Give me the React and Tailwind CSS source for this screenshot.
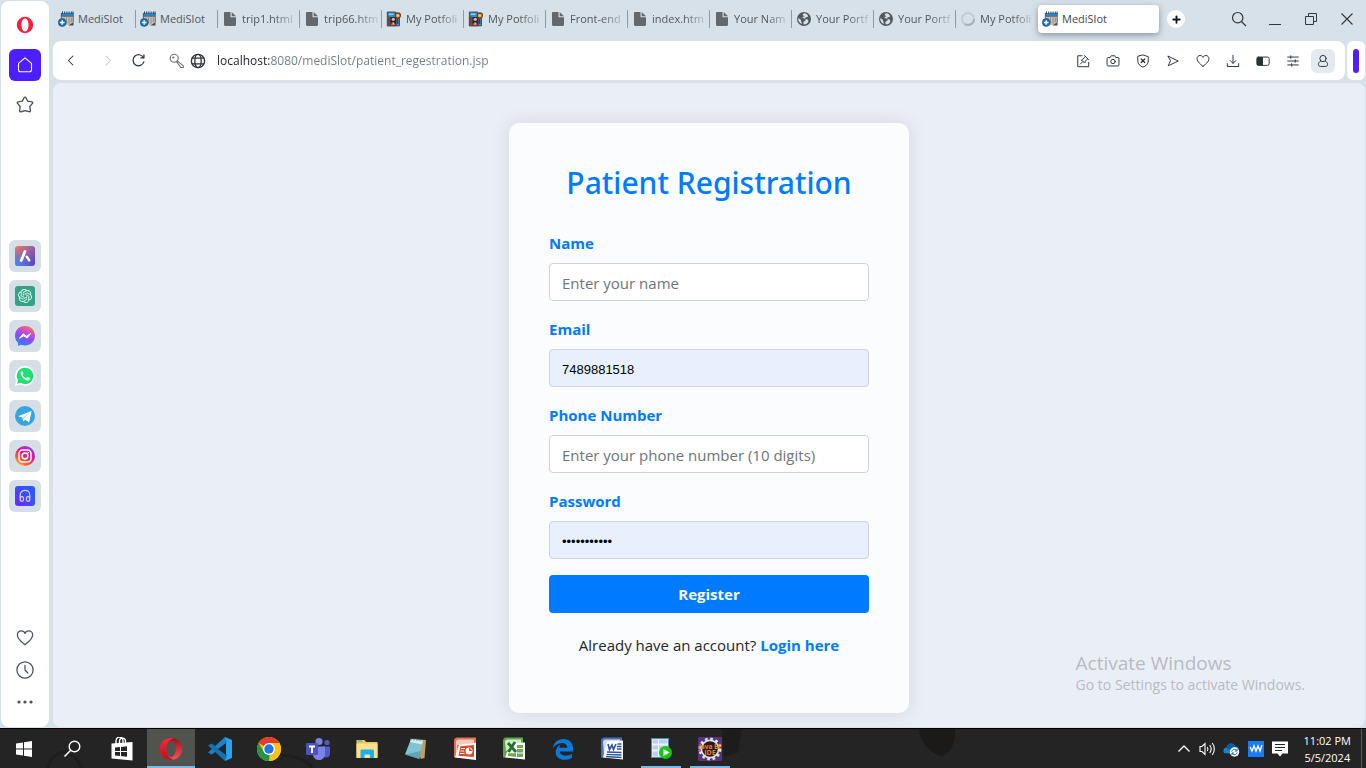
import React from "react";
import { Plus } from "lucide-react";
import { SiOpenai } from "react-icons/si";

/* ---------- tab favicons ---------- */

function CalendarIcon() {
  return (
    <svg viewBox="0 0 16 16" className="size-4 shrink-0" aria-hidden="true">
      <path d="M3 2h12l.4 10-2.400 2H4z" fill="#c4c0bb" />
      <path d="M15.500 11v3.500h-5z" fill="#4a4a4a" />
      <rect x="3.200" y="2" width="12" height="3" fill="#2388d6" />
      <path d="M3.200 5.300h12M3.300 2v11M15.300 2v9" stroke="#4a4f54" strokeWidth="0.800" />
      <path d="M4.500.5v2.200M6.700.5v2.200M8.900.5v2.200M11.100.5v2.200M13.300.5v2.200M15 .5v2.200" stroke="#30363b" strokeWidth="1" />
      <path d="M6 6.500v6M8.500 6.500v6M11 6.500v6M13.300 6.500v4.500" stroke="#8b8682" strokeWidth="0.900" />
      <circle cx="4.200" cy="11.500" r="3.900" fill="#1673bd" stroke="#164a78" strokeWidth="0.600" />
      <path d="M4.200 9.200v4.600M1.900 11.500h4.600" stroke="#fff" strokeWidth="1.400" />
    </svg>
  );
}

function FileIcon() {
  return (
    <svg viewBox="0 0 16 16" className="size-4 shrink-0" aria-hidden="true">
      <path d="M3.200 1h5.300v5.300H14v7.500c0 .7-.5 1.200-1.200 1.200H3.200C2.500 15 2 14.500 2 13.800V2.200C2 1.500 2.500 1 3.200 1z" fill="#63686c" />
      <path d="M9.700 1 14 5.200H9.700z" fill="#63686c" />
    </svg>
  );
}

function PortfolioIcon() {
  return (
    <svg viewBox="0 0 16 16" className="size-4 shrink-0" aria-hidden="true">
      <path d="M1.300 1h8.500v14H1.300z" fill="#2f8fd8" stroke="#35302f" strokeWidth="0.800" />
      <path d="M9.500 7.500h4v7.300h-4z" fill="#3d96d6" stroke="#37302e" strokeWidth="0.800" />
      <path d="M3 2.500h4.500v1.500H3z" fill="#8ed0f4" />
      <path d="M2 5.500h1.800v9H2z" fill="#7b3b25" />
      <rect x="4.300" y="6" width="6.200" height="8.800" fill="#27272d" />
      <circle cx="7.300" cy="8.300" r="1.600" fill="#f3b58d" />
      <path d="M4.800 14.600c0-4 4.900-4 4.900 0z" fill="#e14b37" />
      <path d="M7.200 11.500v2" stroke="#fff" strokeWidth="0.900" />
      <path d="M11.700 8v5" stroke="#5b331c" strokeWidth="1.300" />
      <circle cx="11.800" cy="4.600" r="2.600" fill="#f2a33a" stroke="#713e1f" strokeWidth="1.300" />
      <circle cx="11.800" cy="4.600" r="1" fill="#fbd58a" />
    </svg>
  );
}

function WorldIcon() {
  return (
    <svg viewBox="0 0 16 16" className="size-4 shrink-0" aria-hidden="true">
      <circle cx="8" cy="8" r="7" fill="#54595d" />
      <path d="M8.800 2.300c-1.400.4-2.400 1.200-2 2 .3.700 1.400.1 1.600.9.100.7-1.800.5-2 1.400-.1.700 1 .8 2.200.8 1.400.1 1.500 1.400.8 2.100-.6.700-1.800.7-2 1.700-.1.800.2 1.700.8 2.300 1.700-.2 3.400-1.300 4.300-2.800-.6-.8-.2-1.600-1-2.300-.7-.6-2.200-.2-2.300-1.200 0-.9 1.300-.9 2.200-1.100.6-.1.700-1 .3-1.800-.7-.9-1.700-1.700-2.900-2z" fill="#d7e1e9" />
      <path d="M2.200 7.300c1.300.5 2.400.8 2.700 1.700.3.800-.1 1.700.8 2.400v1.600C3.500 12 2.100 10 2.200 7.300z" fill="#d7e1e9" />
    </svg>
  );
}

function SpinnerIcon() {
  return (
    <svg viewBox="0 0 16 16" className="size-4 shrink-0" aria-hidden="true">
      <circle cx="8" cy="8" r="6" fill="none" stroke="#c3ccd5" strokeWidth="2" />
      <path d="M14 8a6 6 0 0 1-9 5.200" fill="none" stroke="#a7b1bb" strokeWidth="2" />
    </svg>
  );
}

const TABS = [
  ["MediSlot", CalendarIcon],
  ["MediSlot", CalendarIcon],
  ["trip1.html", FileIcon],
  ["trip66.htm", FileIcon],
  ["My Potfoli", PortfolioIcon],
  ["My Potfoli", PortfolioIcon],
  ["Front-end", FileIcon],
  ["index.htm", FileIcon],
  ["Your Nam", FileIcon],
  ["Your Portf", WorldIcon],
  ["Your Portf", WorldIcon],
  ["My Potfoli", SpinnerIcon],
];

function TabStrip() {
  return (
    <div className="flex items-center pt-[5px] pb-2 pl-px">
      <div className="flex min-w-0 items-center">
        {TABS.map(([title, Icon], i) => (
          <button
            key={i}
            type="button"
            className="relative flex h-7 w-[82px] min-w-0 shrink items-center gap-1 pl-1 text-[11px] text-[#50575d]"
          >
            <Icon />
            <span
              className={`min-w-0 flex-1 overflow-hidden text-left whitespace-nowrap ${
                title === "MediSlot" ? "" : "[mask-image:linear-gradient(to_right,black_55%,transparent)]"
              }`}
            >
              {title}
            </span>
            {i < TABS.length - 1 && <i className="absolute top-[5px] right-0 h-[18px] w-px bg-[#92999f]" />}
          </button>
        ))}
        <button
          type="button"
          className="flex h-7 w-[121px] items-center gap-1 rounded-[4px] bg-white px-1 text-[11px] text-[#41484e] shadow-[0_2px_6px_rgba(60,75,90,0.5)]"
        >
          <CalendarIcon />
          <span>MediSlot</span>
        </button>
      </div>
      <button type="button" aria-label="New tab" className="ml-2 flex size-[18px] shrink-0 items-center justify-center rounded-full bg-white text-[#101820]">
        <Plus size={11} strokeWidth={4} />
      </button>
      <div className="ml-auto flex shrink-0 text-[#33383c]">
        <button type="button" aria-label="Search tabs" className="flex h-7 w-9 items-center justify-center">
          <svg viewBox="0 0 16 16" className="size-4" fill="none" stroke="currentColor" strokeWidth="1.200">
            <circle cx="6.700" cy="6.700" r="5.200" />
            <path d="m10.500 10.500 4.500 4.500" />
          </svg>
        </button>
        <button type="button" aria-label="Minimize" className="flex h-7 w-9 items-center justify-center">
          <svg viewBox="0 0 14 14" className="size-3.5"><path d="M1 12.500h12" stroke="currentColor" /></svg>
        </button>
        <button type="button" aria-label="Restore" className="flex h-7 w-9 items-center justify-center">
          <svg viewBox="0 0 14 14" className="size-3.5" fill="none" stroke="currentColor">
            <path d="M1.500 4.500h8v8h-8zM4.500 4.500v-3h8v8h-3" />
          </svg>
        </button>
        <button type="button" aria-label="Close window" className="flex h-7 w-9 items-center justify-center">
          <svg viewBox="0 0 14 14" className="size-3.5"><path d="m1.500 1.500 11 11m0-11-11 11" stroke="currentColor" strokeWidth="1.100" /></svg>
        </button>
      </div>
    </div>
  );
}

/* ---------- address bar ---------- */

function Line({ children, className = "size-4" }) {
  return (
    <svg viewBox="0 0 16 16" className={className} fill="none" stroke="currentColor" strokeWidth="1.100" strokeLinecap="round" strokeLinejoin="round" aria-hidden="true">
      {children}
    </svg>
  );
}

const HEART = <path d="M8 14C5.500 12 1.200 9 1.200 5.300 1.200 3.200 2.800 1.700 4.700 1.700 6.200 1.700 7.400 2.500 8 3.900 8.600 2.500 9.800 1.700 11.300 1.700 13.200 1.700 14.800 3.200 14.800 5.300 14.800 9 10.500 12 8 14z" />;

const TOOLS = [
  ["Easy setup", <><path d="M7 2H2v12.500h12.500V9.500" /><path d="m5 11.500 2.700-2.700M6.500 7l3.300 3.300c.7-.5.9-1.300.7-2l3-2.800L10.800 2.700 8 5.800C7.400 5.900 6.900 6.300 6.500 7zM9.800 1.800l4.500 4.500" /></>],
  ["Snapshot", <><path d="M1.200 5.200c0-.7.5-1.200 1.200-1.200h2.400L6 2h4l1.200 2h2.400c.7 0 1.200.5 1.200 1.200v7.300c0 .7-.5 1.200-1.200 1.200H2.400c-.7 0-1.200-.5-1.200-1.200z" /><circle cx="8" cy="8.600" r="2.500" /></>],
  ["Shield", <><path d="M8 1.200 14 3v5c0 3.500-2.700 5.700-6 7-3.300-1.300-6-3.500-6-7V3z" /><path d="m6 5.800 4 4m0-4-4 4" strokeWidth="1.500" /></>],
  ["Send page", <path d="M2.500 2.500 14 8 2.500 13.500 5 8z" />],
  ["Bookmark", HEART],
  ["Downloads", <><path d="M8 1.500v9M4.800 7.500 8 10.700l3.200-3.200" /><path d="M1.500 11v3.300h13V11" /></>],
  ["Battery saver", <><rect x="1" y="3.500" width="14" height="9.500" rx="1.800" /><path d="M2 3.500h6v9.500H2L1 12V4.500z" fill="currentColor" stroke="none" /></>],
  ["Settings", <><path d="M2 3.500h12M2 8h12M2 12.500h12M5.500 2v3M10.500 6.500v3M6.500 11v3" /></>],
];

function AddressBar() {
  return (
    <div className="flex gap-0.5">
      <div className="flex h-[39px] min-w-0 flex-1 items-center rounded-lg bg-white pr-[7px] text-[#27323b]">
        <button type="button" aria-label="Back" className="flex w-9 justify-center"><Line className="size-[15px]"><path d="M9.500 3.200 4.700 8l4.800 4.800" /></Line></button>
        <button type="button" aria-label="Forward" className="flex w-9 justify-center text-[#c0c5c9]"><Line className="size-[15px]"><path d="M6.500 3.200 11.300 8l-4.800 4.800" /></Line></button>
        <button type="button" aria-label="Reload" className="flex w-[26px] justify-center">
          <Line className="size-[15px]"><path d="M13.200 4.800A5.900 5.900 0 1 0 13.700 9.500" strokeWidth="1.300" /><path d="M13.800 2v3.300h-3.300" strokeWidth="1.300" /></Line>
        </button>
        <button type="button" aria-label="Saved passwords" className="ml-4 flex w-5 justify-center text-[#6a7177]">
          <Line><circle cx="5.200" cy="5.200" r="4" /><circle cx="4.300" cy="4.500" r=".5" /><path d="m8.300 7.800 6 5v1.700h-2.500L7.500 8.700" /></Line>
        </button>
        <button type="button" aria-label="Site information" className="flex w-[22px] justify-center">
          <Line><g strokeWidth="1.300"><circle cx="8" cy="8" r="6.600" /><ellipse cx="8" cy="8" rx="3.200" ry="6.600" /><path d="M2.200 5.200h11.600M2.200 10.800h11.600" /></g></Line>
        </button>
        <input
          aria-label="Address"
          defaultValue="localhost:8080/mediSlot/patient_regestration.jsp"
          className="ml-2 min-w-0 flex-1 bg-[linear-gradient(to_right,#1a1f24_53px,#6b7d8e_53px)] bg-clip-text text-xs text-transparent caret-black outline-none"
        />
        <div className="flex shrink-0">
          {TOOLS.map(([label, art]) => (
            <button key={label} type="button" aria-label={label} className="flex h-6 w-[30px] items-center justify-center"><Line className="size-[14px]">{art}</Line></button>
          ))}
          <button type="button" aria-label="Profile" className="mx-[3px] flex size-6 items-center justify-center rounded-md bg-[#e4eaef]">
            <Line className="size-[14px]"><circle cx="8" cy="5.200" r="3.600" /><path d="M5.300 8C3.500 9 2.800 10.500 2.800 12c0 1.500 1 2.200 2.300 2.200h5.800c1.300 0 2.300-.7 2.300-2.200 0-1.500-.7-3-2.500-4" /></Line>
          </button>
        </div>
      </div>
      <div className="flex w-[18px] items-center justify-center rounded-md bg-white">
        <span className="h-6 w-1.5 rounded-full bg-[#4d1fff]" />
      </div>
    </div>
  );
}

/* ---------- browser sidebar ---------- */

const APPS = [
  ["Aria", (
    <><defs><linearGradient id="aria" x1="0" y1="0" x2="1" y2="1"><stop stopColor="#f87a55" /><stop offset=".45" stopColor="#9a62a0" /><stop offset="1" stopColor="#4b3fd0" /></linearGradient>
      <linearGradient id="aria2" x1="0" y1="1" x2=".5" y2=".5"><stop stopColor="#318dff" /><stop offset="1" stopColor="#318dff" stopOpacity="0" /></linearGradient></defs>
      <rect width="20" height="20" rx="3" fill="url(#aria)" /><rect width="20" height="20" rx="3" fill="url(#aria2)" />
      <path d="M10 5.500 6.200 14.500" stroke="#fff" strokeWidth="2.800" strokeLinecap="round" /><path d="m11.800 10.800 2.400 3.500" stroke="#fff" strokeWidth="2.600" strokeLinecap="round" /></>
  )],
  ["ChatGPT", (
    <><rect width="20" height="20" rx="3" fill="#32a388" /><SiOpenai x="3" y="3" size={14} color="#e6f6f1" /></>
  )],
  ["Messenger", (
    <><defs><linearGradient id="msg" x1=".2" y1="1" x2=".7" y2="0"><stop stopColor="#1a8cff" /><stop offset=".5" stopColor="#9a45f8" /><stop offset="1" stopColor="#ff6670" /></linearGradient></defs>
      <path d="M10 0C4.300 0 0 4.200 0 9.700c0 2.900 1.200 5.400 3.100 7.100V20l2.900-1.200c1.300.4 2.600.6 4 .6 5.700 0 10-4.200 10-9.700S15.700 0 10 0z" fill="url(#msg)" />
      <path d="m4.500 12.300 3.600-4.500 3.200 2.400 4.300-2.800-3.400 4.700-3.400-2.300z" fill="#fff" stroke="#fff" strokeWidth="1" strokeLinejoin="round" /></>
  )],
  ["WhatsApp", (
    <><path d="M10 0a9.900 9.900 0 0 0-8.600 14.800L0 20l5.300-1.400A9.900 9.900 0 1 0 10 0z" fill="#fff" />
      <path d="M10 1.700a8.200 8.200 0 0 0-7 12.500l-.9 3.500 3.600-.9A8.200 8.200 0 1 0 10 1.700z" fill="#20df73" />
      <path d="M6.600 5.200c-1 .8-1.300 2-.6 3.500 1.200 2.700 3 4.500 5.600 5.500 1.500.5 2.800 0 3.300-1.300.2-.7 0-.9-.5-1.100l-1.700-.8c-.4-.2-.7 0-1 .4-.5.700-.8.700-1.500.3-1-.6-1.900-1.400-2.500-2.500-.3-.5.300-.8.600-1.400.1-.3 0-.6-.1-.9L7.600 5.500c-.2-.4-.5-.5-1-.3z" fill="#fff" /></>
  )],
  ["Telegram", (
    <><circle cx="10" cy="10" r="10" fill="#34a5de" />
      <path d="m3.800 9.900 11.800-4.600c.5-.2 1 .1.800.9l-2 9.300c-.1.700-.6.800-1.100.5l-3-2.300-1.500 1.400c-.3.300-.6.300-.7-.2l-.8-3.300-3.400-1.100c-.6-.2-.6-.4-.1-.6z" fill="#fff" />
      <path d="m7.800 11.700 5.700-4-4.600 4.700-.2 2z" fill="#a9d5ec" /></>
  )],
  ["Instagram", (
    <><defs><linearGradient id="insta" x1=".1" y1="1" x2=".8" y2="0"><stop stopColor="#ffd54c" /><stop offset=".3" stopColor="#ff5a2c" /><stop offset=".6" stopColor="#ee138c" /><stop offset="1" stopColor="#8938f5" /></linearGradient></defs>
      <circle cx="10" cy="10" r="10" fill="url(#insta)" />
      <g fill="none" stroke="#fff" strokeWidth="1.500"><rect x="4" y="4" width="12" height="12" rx="3.500" /><circle cx="10" cy="10" r="2.900" /></g>
      <circle cx="13.400" cy="6.600" r=".8" fill="#fff" /></>
  )],
  ["Player", (
    <><defs><linearGradient id="player" x1="0" y1="1" x2="1" y2="0"><stop stopColor="#7720ff" /><stop offset=".55" stopColor="#3a50ff" /><stop offset="1" stopColor="#235cff" /></linearGradient></defs>
      <rect width="20" height="20" rx="3" fill="url(#player)" />
      <path d="M7 15.300c.9 0 1.500-.6 1.500-1.500v-1.600c0-.9-.6-1.500-1.500-1.500-1.200 0-1.800.8-1.800 2.300s.6 2.300 1.800 2.300zM13 15.300c-.9 0-1.500-.6-1.500-1.500v-1.600c0-.9.6-1.500 1.500-1.500 1.200 0 1.800.8 1.800 2.300s-.6 2.300-1.800 2.300zM5.200 12.500V9c0-6.300 9.600-6.300 9.600 0v3.500" fill="none" stroke="#d2cdff" strokeWidth="1.200" /></>
  )],
];

function SideButton({ label, children, className = "" }) {
  return (
    <button type="button" aria-label={label} className={`flex size-8 items-center justify-center rounded-md ${className}`}>
      {children}
    </button>
  );
}

function Sidebar() {
  return (
    <nav aria-label="Sidebar" className="my-px ml-px flex w-12 shrink-0 flex-col items-center rounded-lg bg-white pt-2 pb-[9px] text-[#4a535b]">
      <div className="flex flex-col gap-2">
        <SideButton label="Opera menu">
          <svg viewBox="0 0 18 18" className="size-[18px]"><path fillRule="evenodd" d="M9 .8a8.200 8.200 0 1 0 0 16.400A8.200 8.200 0 0 0 9 .8zm0 1.800c2.200 0 3.500 2.700 3.500 6.400s-1.300 6.400-3.500 6.400S5.500 12.700 5.500 9 6.800 2.600 9 2.600z" fill="#fa1e3c" /></svg>
        </SideButton>
        <SideButton label="Home" className="bg-[#4d1fff] text-white">
          <Line><path d="m8 .8 6.500 5.500v6.500c0 1.300-.7 2-2 2h-9c-1.300 0-2-.7-2-2V6.300z" /></Line>
        </SideButton>
        <SideButton label="Favorites">
          <Line className="size-[18px]"><path strokeWidth="1.200" d="M7.200 1.500c.4-.7 1.200-.7 1.600 0l1.600 3.100 3.700.6c.8.100 1 .9.500 1.400l-2.300 2.700.5 3.600c.1.900-.6 1.300-1.300 1L8 13l-3.500 1c-.7.200-1.400-.2-1.300-1l.5-3.700-2.300-2.700c-.5-.5-.3-1.300.5-1.400l3.700-.6z" /></Line>
        </SideButton>
      </div>
      <div className="mt-[119px] flex flex-col gap-2">
        {APPS.map(([label, art]) => (
          <SideButton key={label} label={label} className="bg-[#d5dfe5]">
            <svg viewBox="0 0 20 20" className="size-5" fill="none">{art}</svg>
          </SideButton>
        ))}
      </div>
      <div className="mt-auto flex flex-col">
        <SideButton label="Likes"><Line className="size-[18px]">{HEART}</Line></SideButton>
        <SideButton label="History"><Line className="size-[18px]"><circle cx="8" cy="8" r="7.200" /><path d="M8 3.800V8l2.500 2.700" /></Line></SideButton>
        <SideButton label="More">
          <svg viewBox="0 0 16 4" className="h-1 w-4" fill="currentColor"><circle cx="2" cy="2" r="1.600" /><circle cx="8" cy="2" r="1.600" /><circle cx="14" cy="2" r="1.600" /></svg>
        </SideButton>
      </div>
    </nav>
  );
}

/* ---------- page ---------- */

const FIELDS = [
  { id: "name", label: "Name", type: "text", placeholder: "Enter your name" },
  { id: "email", label: "Email", type: "text", value: "7489881518" },
  { id: "phone", label: "Phone Number", type: "tel", placeholder: "Enter your phone number (10 digits)" },
  { id: "password", label: "Password", type: "password", value: "password123" },
];

function RegistrationPage() {
  return (
    <main className="relative flex flex-1 items-start justify-center overflow-hidden rounded-lg bg-[#eaeff7] px-4 pt-10 pb-[14px]">
      <form
        onSubmit={(e) => e.preventDefault()}
        className="w-full max-w-[400px] rounded-[10px] bg-[#fbfcfe] p-10 text-[15px] leading-6 shadow-[0_0_20px_rgba(0,0,0,0.1)]"
      >
        <h2 className="mb-[30px] pt-0.5 text-center font-['Noto_Sans','Open_Sans',sans-serif] text-[30px] leading-[36px] font-medium text-[#007bff]">
          Patient Registration
        </h2>
        {FIELDS.map((f) => (
          <div key={f.id} className="mb-4">
            <label htmlFor={f.id} className="mb-2 block font-bold text-[#007bff]">{f.label}</label>
            <input
              id={f.id}
              type={f.type}
              placeholder={f.placeholder}
              defaultValue={f.value}
              className={`block h-[38px] w-full rounded-[4px] border border-[#ced4da] px-3 pt-0.5 outline-none placeholder:text-[#6c757d] ${
                f.value ? "bg-[#e8f0fe] font-['Liberation_Sans',Arial,sans-serif] text-[13px] text-black" : "bg-white"
              }`}
            />
          </div>
        ))}
        <button type="submit" className="block h-[38px] w-full rounded-[4px] bg-[#007bff] font-bold text-white">Register</button>
        <p className="mt-5 mb-4 text-center text-[#212529]">
          Already have an account? <a href="#login" className="font-bold text-[#007bff]">Login here</a>
        </p>
      </form>
      <div className="pointer-events-none absolute right-15 bottom-8 text-[#b8bbc0]">
        <p className="text-[19px] leading-6">Activate Windows</p>
        <p className="text-sm leading-5">Go to Settings to activate Windows.</p>
      </div>
    </main>
  );
}

/* ---------- taskbar ---------- */

const TASKS = [
  ["Start", <path d="M4 6.500 11 5.500v6H4zM12 5.300l8-1.200v7.400h-8zM4 12.500h7v6l-7-1zM12 12.500h8v7.400l-8-1.200z" fill="#fff" />],
  ["Search", <><circle cx="13.500" cy="9.500" r="5.300" fill="none" stroke="#fff" strokeWidth="1.400" /><path d="m9.700 13.300-6.200 6.200" stroke="#fff" strokeWidth="1.600" /></>],
  ["Store", <><path d="M1.500 6.500 22.500 5v18.500l-21-2z" fill="#fff" /><path d="M6 7V4.500C6-1.500 13-1 13 4v2.500M9.500 6V4.500c0-4.500 6-4.500 6 0V6" fill="none" stroke="#fff" strokeWidth="1.400" /><path d="m5 10.500 5-.5v4H5zM11 9.900l6-.6v4.700h-6zM5 15h5v4l-5-.5zM11 15h6v4.800l-6-.7z" fill="#262626" /></>],
  ["Opera", <><defs><linearGradient id="op1" x2="0" y2="1"><stop stopColor="#ff2a3b" /><stop offset="1" stopColor="#b90d1c" /></linearGradient><linearGradient id="op2" x2="0" y2="1"><stop stopColor="#a20b18" /><stop offset="1" stopColor="#ff5257" /></linearGradient></defs><ellipse cx="12" cy="12" rx="11.200" ry="11" fill="url(#op2)" /><path d="M15.500 2.200C10.500-1 .8 2.500.8 12s9.700 13 14.700 9.800c-5 1-8-4-8-9.800s3-10.800 8-9.800z" fill="url(#op1)" /><ellipse cx="12" cy="12" rx="4.800" ry="8.200" fill="#51534f" /></>],
  ["Visual Studio Code", <><path d="m17 0 7 3v18l-7 3z" fill="#27a4ee" /><path d="m17 0 2 6-15.300 11.500L0 15.500z" fill="#1b83c5" /><path d="m17 24 2-6L3.700 6.500 0 8.500z" fill="#1173b3" /><path d="M18 6v12l-8-6z" fill="#242424" /></>],
  ["Chrome", <><circle cx="12" cy="12" r="12" fill="#fbc116" /><path d="M12 12 1.600 6A12 12 0 0 1 22.400 6z" fill="#e33b2e" /><path d="M1.600 6 7 15l5.500 2.500L12 24A12 12 0 0 1 1.600 6z" fill="#269447" /><path d="M12 6h10.400a12 12 0 0 1-10.400 18l5-9z" fill="#fbc116" /><circle cx="12" cy="12" r="6" fill="#fff" /><circle cx="12" cy="12" r="4.700" fill="#2177e8" /></>],
  ["Teams", <><circle cx="13" cy="4.500" r="3.600" fill="#7b83eb" /><circle cx="21" cy="5.500" r="2.600" fill="#5059c9" /><path d="M17 9.500h7v7c0 4-4 5-7 3z" fill="#5059c9" /><path d="M7 9.500h12v7.500c0 8-12 8-12 0z" fill="#7b83eb" /><rect y="6" width="12" height="12" rx="1" fill="#4b53bc" /><path d="M3 9.500h6M6 9.500v6.500" stroke="#fff" strokeWidth="1.800" /></>],
  ["File Explorer", <><path d="M1.500 3h8l1.500 2h11.500v15.500h-21z" fill="#efc451" /><path d="M1.500 6.500h21v14.500h-21z" fill="#ffe08a" /><path d="M3 4h4" stroke="#3bb4e8" strokeWidth="1.200" /><path d="M5.500 14c0-1 .6-1.500 1.500-1.500h10.500c.9 0 1.500.5 1.500 1.500v7h-4v-3.500h-5.500V21h-4z" fill="#18b1f0" /></>],
  ["Notepad", <><path d="m8 2 14 1-1.500 18L17 22z" fill="#c59c61" /><path d="m7 2 12 1.500L15.500 22 1 17.500z" fill="#81c3d0" /><path d="m7 2 12 1.500-1 4L6 5z" fill="#d5edf2" /><path d="m1 17.500 14.500 4.500 1.500-8z" fill="#4593a4" opacity=".6" /><path d="M7 1v2.500M10 1.200v2.500M13 1.500V4M16 1.700v2.500" stroke="#59777e" strokeWidth=".8" /></>],
  ["PowerPoint", <><path d="M1 4c0-2 1-3.500 3-3.500h19V6L5 20.500H1z" fill="#e2714f" /><path d="M3 5c0-1.500 1-2.500 2.500-2.500H21V6L4 8v10H3z" fill="#f9cabc" /><path d="m6 7.500 17-1.700V23L2 20.500z" fill="#fff" /><path d="m7.500 9.300 13.500-1.200v12L5.500 18.800z" fill="#dc4923" /><circle cx="16" cy="14" r="3.500" fill="#fff" /><path d="M16 14v-3.700l3.500 3.700z" fill="#dc4923" /><path d="M8 11.500h4M7.500 14h3.500M7 16.500h4.500" stroke="#fff" strokeWidth="1.200" /></>],
  ["Excel", <><path d="M1 4c0-2 1-3.500 3-3.500h17V6L5 20.500H1z" fill="#5da64d" /><path d="M3 5c0-1.500 1-2.500 2.500-2.500H19V6L4 14z" fill="#d3ecc8" /><path d="m5 15 8-9 10-.5V22.500L3 20.500z" fill="#fff" /><path d="M15 8h6v3h-6zM15 12h6v3.500h-6zM15 16.500h6v3.500h-6zM6 16.200h8V20l-8-1z" fill="#6caa54" /><path d="m6 6 8 9M13 5 6.500 15" stroke="#256d34" strokeWidth="2.800" /></>],
  ["Edge", <path transform="translate(2 2) scale(.84)" d="M0 10.700C.7 4.500 5.300 0 12.500 0 19.500 0 24 5 24 11.500V15H8c.5 5 8 6.500 14.500 3v4.500C12 28 1.500 23 3.500 13.500c.8-3.500 3-5.700 5.700-7C8 8 7.800 9.200 7.700 10.500H17C17 2.500 5.500 3 0 10.700z" fill="#087bd8" />],
  ["Word", <><path d="M1 4c0-2 1-3.500 3-3.500h18V6L5 20.500H1z" fill="#4b70b4" /><path d="M3 5c0-1.500 1-2.500 2.500-2.500H20V6L4 18z" fill="#cfdcf2" /><path d="m7 4.500 16-1V22.500L3 20.500z" fill="#fff" /><path d="M17.500 7h4M17 9.500h4.500M17 12h4.500M7 15l14.500.5M6.500 17.300l15 .7M6 19.500l15.500 1" stroke="#2b559f" strokeWidth="1.300" /><path d="m8 7 1.500 5.500L12 8l1.500 4.500L16 7" fill="none" stroke="#2b559f" strokeWidth="1.700" /></>],
  ["Server Manager", <><rect x="2.500" y="1.500" width="17" height="19" fill="#edf4fb" stroke="#5b84b5" /><path d="M3.500 2.500h15v4h-15zM3.500 8.500h15v4h-15zM3.500 14.500h15v5h-15z" fill="#b9d0ea" /><path d="M9.500 2.500v17" stroke="#e9f3fc" /><circle cx="16.500" cy="15.500" r="6.500" fill="#18c80e" /><path d="m14.500 12 6 3.500-6 3.500z" fill="#fff" /></>],
  ["Java EE IDE", <><rect width="24" height="24" rx="1" fill="#54357b" /><circle cx="12" cy="12" r="10" fill="none" stroke="#e2e2e2" strokeWidth="3" strokeDasharray="2.600 2.636" /><circle cx="12" cy="12" r="8.600" fill="#201c26" stroke="#e2e2e2" strokeWidth="1.600" /><text x="12" y="11.500" textAnchor="middle" fontSize="6.500" fontWeight="700" fill="#f58220">Java EE</text><text x="12" y="18" textAnchor="middle" fontSize="7" fontWeight="700" fill="#f58220">IDE</text></>],
];

function Taskbar() {
  return (
    <footer className="relative flex h-10 shrink-0 items-stretch overflow-hidden border-t border-black bg-[#242424] text-white">
      <svg viewBox="0 0 1366 40" preserveAspectRatio="none" className="absolute inset-0 h-full w-full" aria-hidden="true">
        <path d="M919 0h36c1 10-3 25-13 28-10-2-22-13-23-28z" fill="#1b1a19" />
        <path d="M722 0h20l-4 24-14 4z" fill="#1e1c1b" />
        <path d="M48 40C52 20 72 18 82 40M280 26c18 2 30 8 32 14" fill="none" stroke="#1e1e1e" strokeWidth="3" />
      </svg>
      <div className="relative flex gap-px">
        {TASKS.map(([label, art], i) => (
          <button
            key={label}
            type="button"
            aria-label={label}
            className={`relative flex w-12 items-center justify-center ${i === 3 ? "bg-[#51534f]" : ""}`}
          >
            <svg viewBox="0 0 24 24" className="size-6">{art}</svg>
            {i === 3 && <i className="absolute inset-x-0 bottom-0 h-0.5 bg-[#76b9ed]" />}
            {i > 12 && <i className="absolute inset-x-1 bottom-0 h-0.5 bg-[#76b9ed]" />}
          </button>
        ))}
      </div>
      <div className="relative ml-auto flex items-center">
        <button type="button" aria-label="Hidden icons" className="flex w-6 justify-center">
          <svg viewBox="0 0 16 16" className="size-4"><path d="m2.500 10.500 5.500-5.500 5.500 5.500" fill="none" stroke="#fff" strokeWidth="1.300" /></svg>
        </button>
        <button type="button" aria-label="Volume" className="flex w-6 justify-center">
          <svg viewBox="0 0 17 16" className="h-4 w-[17px]" fill="none" stroke="#fff" strokeWidth="1.100"><path d="M1 5.500h2l3-3v11l-3-3H1zM8.300 6c.8 1.200.8 2.800 0 4M10.700 4c1.700 2.300 1.700 5.700 0 8M13.200 2c2.800 3.500 2.800 8.500 0 12" /></svg>
        </button>
        <button type="button" aria-label="OneDrive" className="flex w-6 justify-center">
          <svg viewBox="0 0 17 16" className="h-4 w-[17px]"><path d="M1 12C-.5 9 1 6.500 3.500 6.500 4.500 2 10.500 1 12.500 5.500c2.500.2 4 2 3.500 4.500L10 13z" fill="#1482d3" /><path d="M3.500 6.500C4.500 2 10.500 1 12.500 5.500L6 9z" fill="#075da8" /><circle cx="11.500" cy="11" r="4.700" fill="#fff" /><path d="M8.800 10.500c.5-2.500 3.500-3 4.900-1M14.200 11.500c-.5 2.500-3.500 3-4.900 1M14 7.800V10h-2.200M9 14.200V12h2.200" fill="none" stroke="#175f9e" /></svg>
        </button>
        <button type="button" aria-label="Wondershare" className="flex w-6 justify-center">
          <svg viewBox="0 0 16 16" className="size-4"><rect width="16" height="16" fill="#197cff" /><path d="m2 6 2 4 2-5 2 5 2-5 2 5 2-6" fill="none" stroke="#fff" strokeWidth="1.400" /></svg>
        </button>
        <button type="button" aria-label="Notifications" className="flex w-6 justify-center">
          <svg viewBox="0 0 16 16" className="size-4"><path d="M0 .5h16v12h-5.500L8 15.500l-2.500-3H0z" fill="#fff" /><path d="M3 3.500h10M3 6.500h10M3 9.500h7" stroke="#242424" /></svg>
        </button>
        <div className="mr-2.5 ml-3 text-center text-[11px] leading-[17px] whitespace-nowrap">
          <p>11:02 PM</p>
          <p>5/5/2024</p>
        </div>
        <i className="mr-1 h-10 w-px bg-[#5b5b5b]" />
      </div>
    </footer>
  );
}

export default function App() {
  return (
    <div className="flex min-h-screen flex-col bg-[#d7e1e9] font-['Open_Sans','Noto_Sans',sans-serif]">
      <div className="flex flex-1 gap-1">
        <Sidebar />
        <div className="flex min-w-0 flex-1 flex-col pr-px pb-px">
          <TabStrip />
          <AddressBar />
          <div className="mt-[3px] flex flex-1">
            <RegistrationPage />
          </div>
        </div>
      </div>
      <Taskbar />
    </div>
  );
}
